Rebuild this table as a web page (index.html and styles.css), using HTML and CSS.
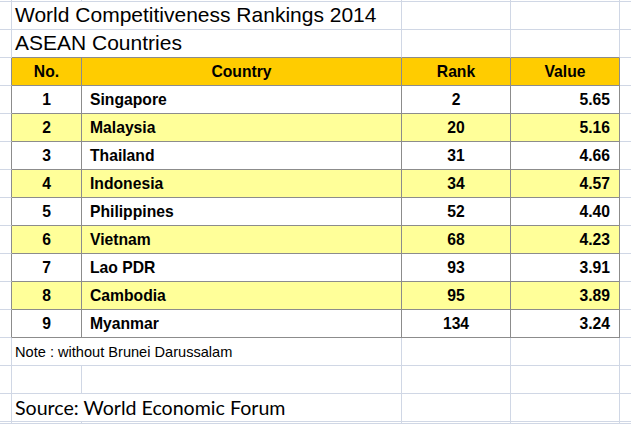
FILE: index.html
```html
<!DOCTYPE html>
<html>
<head>
<meta charset="utf-8">
<link rel="stylesheet" href="styles.css">
</head>
<body>
<div class="sheet">
  <div class="c top"></div><div class="c top"></div><div class="c top"></div><div class="c top"></div><div class="c top"></div><div class="c top f"></div>

  <div class="c"></div><div class="c span title">World Competitiveness Rankings 2014</div><div class="c"></div><div class="c"></div><div class="c f"></div>

  <div class="c"></div><div class="c span title tb">ASEAN Countries</div><div class="c tb"></div><div class="c tb"></div><div class="c f"></div>

  <div class="c edge"></div><div class="c t hd">No.</div><div class="c t hd">Country</div><div class="c t hd">Rank</div><div class="c t hd">Value</div><div class="c f"></div>

  <div class="c edge"></div><div class="c t num">1</div><div class="c t name">Singapore</div><div class="c t num">2</div><div class="c t val">5.65</div><div class="c f"></div>
  <div class="c edge"></div><div class="c t y num">2</div><div class="c t y name">Malaysia</div><div class="c t y num">20</div><div class="c t y val">5.16</div><div class="c f"></div>
  <div class="c edge"></div><div class="c t num">3</div><div class="c t name">Thailand</div><div class="c t num">31</div><div class="c t val">4.66</div><div class="c f"></div>
  <div class="c edge"></div><div class="c t y num">4</div><div class="c t y name">Indonesia</div><div class="c t y num">34</div><div class="c t y val">4.57</div><div class="c f"></div>
  <div class="c edge"></div><div class="c t num">5</div><div class="c t name">Philippines</div><div class="c t num">52</div><div class="c t val">4.40</div><div class="c f"></div>
  <div class="c edge"></div><div class="c t y num">6</div><div class="c t y name">Vietnam</div><div class="c t y num">68</div><div class="c t y val">4.23</div><div class="c f"></div>
  <div class="c edge"></div><div class="c t num">7</div><div class="c t name">Lao PDR</div><div class="c t num">93</div><div class="c t val">3.91</div><div class="c f"></div>
  <div class="c edge"></div><div class="c t y num">8</div><div class="c t y name">Cambodia</div><div class="c t y num">95</div><div class="c t y val">3.89</div><div class="c f"></div>
  <div class="c edge"></div><div class="c t num">9</div><div class="c t name">Myanmar</div><div class="c t num">134</div><div class="c t val">3.24</div><div class="c f"></div>

  <div class="c"></div><div class="c span note">Note : without Brunei Darussalam</div><div class="c"></div><div class="c"></div><div class="c f"></div>

  <div class="c"></div><div class="c"></div><div class="c"></div><div class="c"></div><div class="c"></div><div class="c f"></div>

  <div class="c"></div><div class="c span source">Source: World Economic Forum</div><div class="c"></div><div class="c"></div><div class="c f"></div>

  <div class="c"></div><div class="c"></div><div class="c"></div><div class="c"></div><div class="c"></div><div class="c f"></div>
</div>
</body>
</html>
```
FILE: styles.css
```css
html, body {
  margin: 0;
  padding: 0;
  background: #ffffff;
}

body {
  width: 631px;
  height: 424px;
  overflow: hidden;
  font-family: "Liberation Sans", Arial, sans-serif;
  color: #000000;
}

.sheet {
  display: grid;
  grid-template-columns: 12px 70px 320px 109px 109px 1fr;
  grid-template-rows: 2px repeat(15, 28px) 1fr;
  width: 631px;
  height: 424px;
}

.c {
  box-sizing: border-box;
  border-right: 1px solid #d0d7e5;
  border-bottom: 1px solid #d0d7e5;
  display: flex;
  align-items: center;
  white-space: nowrap;
  overflow: hidden;
  min-width: 0;
}

.c.f {
  border-right: none;
}

.span {
  grid-column: span 2;
}

.title {
  font-size: 21px;
  line-height: 22px;
  align-items: flex-end;
  padding-left: 3px;
  padding-bottom: 3px;
}

.tb {
  border-bottom-color: #8c8c8c;
}

.edge {
  border-right-color: #8c8c8c;
}

.t {
  border-right-color: #8c8c8c;
  border-bottom-color: #8c8c8c;
  font-weight: bold;
  font-size: 15.7px;
}

.hd {
  background: #ffcc00;
  justify-content: center;
}

.y {
  background: #ffff99;
}

.num {
  justify-content: center;
}

.name {
  padding-left: 8px;
}

.val {
  justify-content: flex-end;
  padding-right: 9px;
}

.note {
  font-size: 14.6px;
  padding-left: 3px;
}

.source {
  font-family: Lato, "Open Sans", sans-serif;
  font-size: 19.6px;
  align-items: flex-end;
  padding-left: 3px;
  padding-bottom: 2px;
}
```
